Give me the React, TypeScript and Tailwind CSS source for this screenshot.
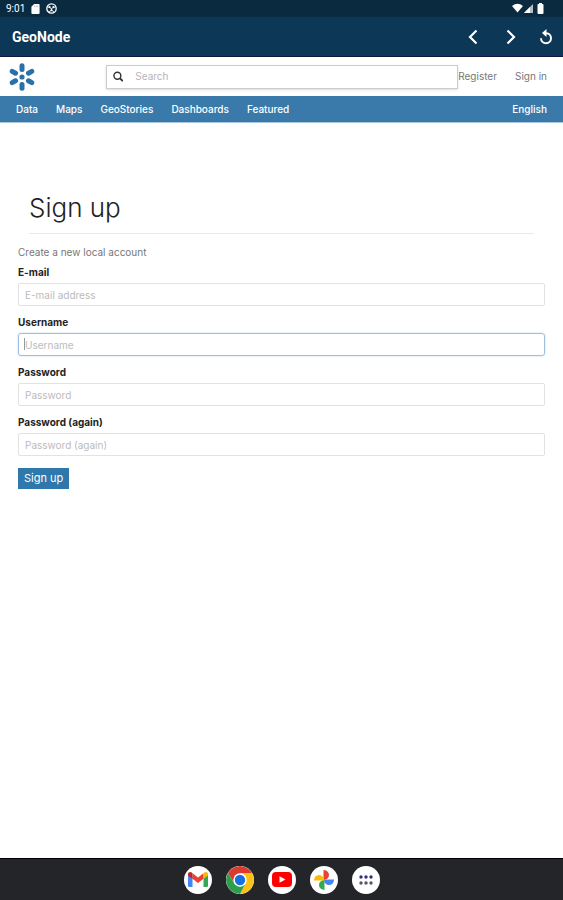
const navLinks = ['Data', 'Maps', 'GeoStories', 'Dashboards', 'Featured']

const fields = [
  { id: 'email', label: 'E-mail', placeholder: 'E-mail address', type: 'email', active: false },
  { id: 'username', label: 'Username', placeholder: 'Username', type: 'text', active: true },
  { id: 'password1', label: 'Password', placeholder: 'Password', type: 'password', active: false },
  { id: 'password2', label: 'Password (again)', placeholder: 'Password (again)', type: 'password', active: false },
]

function StatusBar() {
  return (
    <div className="flex h-[17px] items-center justify-between bg-[#0a2a40] pl-[6px] pr-[18px] text-white">
      <div className="flex items-center gap-[6px]">
        <span className="font-['Roboto',sans-serif] text-[10px] leading-none">9:01</span>
        <svg className="h-[10px] w-[9px]" viewBox="0 0 9 11" fill="currentColor">
          <path d="M3 0h5a1 1 0 0 1 1 1v9a1 1 0 0 1-1 1H1a1 1 0 0 1-1-1V3z" />
          <path d="M3.500 1.500v2M5.300 1.500v2M7 1.500v2" stroke="#8795a0" strokeWidth=".6" />
        </svg>
        <svg className="size-[11px]" viewBox="0 0 11 11" fill="none" stroke="currentColor">
          <circle cx="5.500" cy="5.500" r="4.700" strokeWidth="1.300" />
          <path d="M1 3.500l4.500 2 4.500-2M5.500 5.500V7M2.500 9.500l3-2.500 3 2.500" strokeWidth=".9" />
          <circle cx="3.600" cy="4" r="1" fill="currentColor" stroke="none" />
          <circle cx="7.400" cy="4" r="1" fill="currentColor" stroke="none" />
          <circle cx="5.500" cy="7.300" r="1" fill="currentColor" stroke="none" />
        </svg>
      </div>
      <svg className="h-[11px] w-[33px]" viewBox="0 0 33 11" fill="currentColor">
        <path d="M0 3Q5.500-1.500 11 3L5.500 9.500z" />
        <path d="M12 10L21 1v9z" fillOpacity=".7" />
        <path d="M12 10L18 4v6z" />
        <path d="M27 1V0h3v1h.500a1 1 0 0 1 1 1v8a1 1 0 0 1-1 1h-4a1 1 0 0 1-1-1V2a1 1 0 0 1 1-1z" />
      </svg>
    </div>
  )
}

function AppBar() {
  return (
    <header className="flex h-10 items-center justify-between border-b border-[#0c1c40] bg-[#0c3756] pl-3 pr-[9px] text-white">
      <span className="font-['Roboto',sans-serif] text-sm font-bold">GeoNode</span>
      <div className="flex items-center gap-6">
        <button type="button" aria-label="Back">
          <svg className="h-4 w-[14px]" viewBox="0 0 14 16" fill="none" stroke="currentColor" strokeWidth="2.200">
            <path d="M10.500 1.500L4 8l6.500 6.500" />
          </svg>
        </button>
        <button type="button" aria-label="Forward">
          <svg className="h-4 w-[14px]" viewBox="0 0 14 16" fill="none" stroke="currentColor" strokeWidth="2.200">
            <path d="M3.500 1.500L10 8l-6.500 6.500" />
          </svg>
        </button>
        <button type="button" aria-label="Reload" className="-ml-1">
          <svg className="size-4" viewBox="0 0 16 16" fill="none" stroke="currentColor" strokeWidth="2">
            <path d="M7 4.200h1.200A5 5 0 1 1 3 9.300" />
            <path d="M8.500 0v8L4 4z" fill="currentColor" stroke="none" />
          </svg>
        </button>
      </div>
    </header>
  )
}

function Logo() {
  return (
    <svg className="size-7" viewBox="-14 -14 28 28" fill="none" stroke="#2a71a8" strokeWidth="5" strokeLinecap="round">
      <circle r="2.600" fill="#2a71a8" stroke="none" />
      {[0, 60, 120, 180, 240, 300].map((angle) => (
        <path key={angle} d="M0-7.500V-11.300" transform={`rotate(${angle})`} />
      ))}
    </svg>
  )
}

function SiteHeader() {
  return (
    <div className="flex h-[39px] items-center bg-white pl-2 pr-4 text-[10px] text-[#777]">
      <a href="#home" aria-label="GeoNode home">
        <Logo />
      </a>
      <div className="ml-[70px] flex h-6 flex-1 items-center gap-3 border border-[#ccc] px-[6px] shadow-sm">
        <svg className="size-[11px]" viewBox="0 0 11 11" fill="none" stroke="#333" strokeWidth="1.500">
          <circle cx="4.700" cy="4.700" r="3.700" />
          <path d="M7.300 7.300L10.500 10.500" strokeWidth="2" />
        </svg>
        <input
          type="search"
          aria-label="Search"
          placeholder="Search"
          className="w-full min-w-0 bg-transparent outline-none placeholder:text-[#b5b5b5]"
        />
      </div>
      <a href="#register">Register</a>
      <a href="#signin" className="ml-[18px]">
        Sign in
      </a>
    </div>
  )
}

function NavBar() {
  return (
    <nav className="flex h-[27px] items-center gap-[18px] border-b border-[#a9c8df] bg-[#397aab] px-4 text-[10px] font-medium text-white">
      {navLinks.map((link) => (
        <a key={link} href={`#${link.toLowerCase()}`}>
          {link}
        </a>
      ))}
      <a href="#language" className="ml-auto">
        English
      </a>
    </nav>
  )
}

function SignUpForm() {
  return (
    <main className="flex-1 px-[18px] pt-[68px]">
      <div className="mx-[11px] border-b border-[#e8e8e8] pb-2">
        <h1 className="text-[26px] font-light leading-[34px] text-[#222]">Sign up</h1>
      </div>
      <p className="mt-[10px] text-[10px] leading-4 text-[#777]">Create a new local account</p>
      <form className="mt-1 flex flex-col items-start gap-2">
        {fields.map((field) => (
          <div key={field.id} className="relative flex w-full flex-col gap-[3px]">
            <label htmlFor={field.id} className="text-[10px] font-bold leading-4 text-[#222]">
              {field.label}
            </label>
            <input
              id={field.id}
              type={field.type}
              placeholder={field.placeholder}
              className={
                field.active
                  ? 'h-[23px] w-full rounded-[3px] border border-[#9dbfdb] px-[6px] text-[10px] shadow-[0_0_2px_#bcd5e8] outline-none placeholder:text-[#bbb]'
                  : 'h-[23px] w-full rounded-[2px] border border-[#e2e2e2] px-[6px] text-[10px] outline-none placeholder:text-[#bbb]'
              }
            />
            {field.active && <span className="absolute bottom-[6px] left-[6px] h-3 w-px bg-[#999]" />}
          </div>
        ))}
        <button type="submit" className="mt-1 h-[21px] bg-[#2f78ab] px-[6px] text-[11px] leading-none text-white">
          Sign up
        </button>
      </form>
    </main>
  )
}

function GmailIcon() {
  return (
    <svg className="h-[15px] w-5" viewBox="0 0 20 15">
      <path d="M0 2v11.500A1.500 1.500 0 0 0 1.500 15H4.500V5z" fill="#4285f4" />
      <path d="M20 2v11.500a1.500 1.500 0 0 1-1.500 1.500H15.500V5z" fill="#34a853" />
      <path d="M4.500 1.300L10 5.500l5.500-4.200v5.500L10 11 4.500 6.800z" fill="#ea4335" />
      <path d="M0 2.200C0 .2 2.200-.6 3.700.6l.8.700v5.500L0 3.600z" fill="#c5221f" />
      <path d="M20 2.200C20 .2 17.800-.6 16.300.6l-.8.700v5.500L20 3.600z" fill="#fbbc04" />
    </svg>
  )
}

function ChromeIcon() {
  return (
    <svg className="size-7" viewBox="-14 -14 28 28">
      <path d="M-12.120-7A14 14 0 0 1 12.120-7L0-6.500-5.600 3.250z" fill="#db3a2f" />
      <path d="M12.120-7A14 14 0 0 1 0 14L5.600 3.250 0-7z" fill="#fbc116" />
      <path d="M0 14A14 14 0 0 1-12.120-7L-5.600 3.250 5.600 3.250z" fill="#2f9e4c" />
      <circle r="6.700" fill="#fff" />
      <circle r="5.200" fill="#1a6fe0" />
    </svg>
  )
}

function YoutubeIcon() {
  return (
    <svg className="h-[15px] w-5" viewBox="0 0 20 15">
      <rect width="20" height="15" rx="4" fill="#f00" />
      <path d="M7.500 4.200v6.600L13.500 7.500z" fill="#fff" />
    </svg>
  )
}

function PhotosIcon() {
  return (
    <svg className="size-5" viewBox="-10 -10 20 20">
      <path d="M-.5 0V-10A5.500 5 0 0 1-.5 0z" fill="#ea4335" />
      <path d="M0-.5H10A5 5.500 0 0 1 0-.5z" fill="#4285f4" />
      <path d="M.5 0V10A5.500 5 0 0 1 .5 0z" fill="#34a853" />
      <path d="M0 .5H-10A5 5.500 0 0 1 0 .5z" fill="#fbbc04" />
    </svg>
  )
}

function AppsIcon() {
  return (
    <svg className="h-[10px] w-[14px]" viewBox="0 0 14 10">
      {[2, 7, 12].map((x) => (
        <g key={x}>
          <circle cx={x} cy="2" r="1.700" fill="#30307c" />
          <circle cx={x} cy="8" r="1.700" fill="#555564" />
        </g>
      ))}
    </svg>
  )
}

const dockApps = [
  { name: 'Gmail', icon: <GmailIcon /> },
  { name: 'Chrome', icon: <ChromeIcon /> },
  { name: 'YouTube', icon: <YoutubeIcon /> },
  { name: 'Photos', icon: <PhotosIcon /> },
  { name: 'All apps', icon: <AppsIcon /> },
]

function Dock() {
  return (
    <footer className="flex h-[42px] items-center justify-center gap-[14px] border-t border-black bg-[#242529]">
      {dockApps.map((app) => (
        <button
          key={app.name}
          type="button"
          aria-label={app.name}
          className="flex size-7 items-center justify-center overflow-hidden rounded-full bg-white"
        >
          {app.icon}
        </button>
      ))}
    </footer>
  )
}

export default function App() {
  return (
    <div className="flex min-h-screen flex-col bg-white font-['Inter','Open_Sans',sans-serif]">
      <StatusBar />
      <AppBar />
      <SiteHeader />
      <NavBar />
      <SignUpForm />
      <Dock />
    </div>
  )
}
